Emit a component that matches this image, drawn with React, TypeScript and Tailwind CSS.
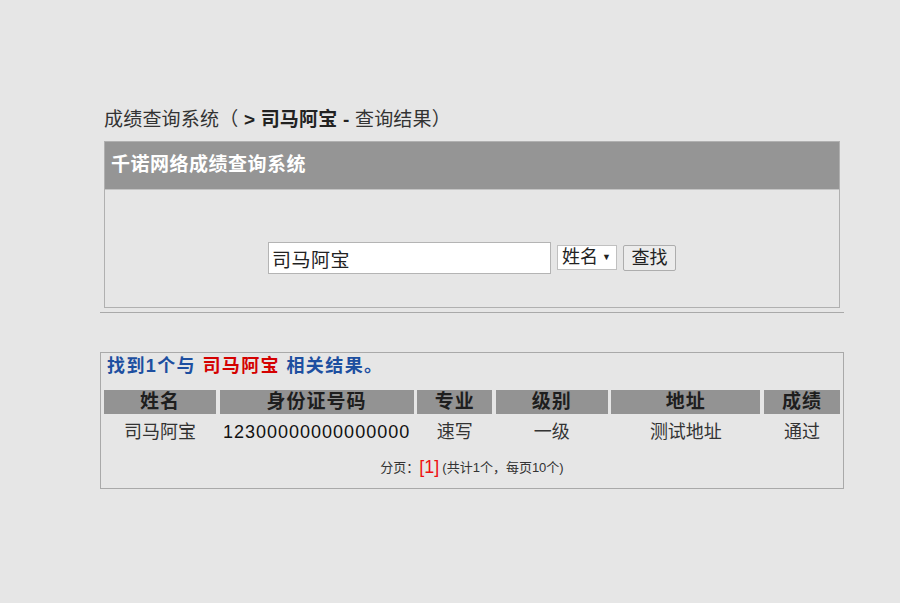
import React from "react";

const font = { fontFamily: '"Liberation Sans", Arial, "Noto Sans CJK SC", sans-serif' };

const columns = [
  { title: "姓名", value: "司马阿宝" },
  { title: "身份证号码", value: "12300000000000000" },
  { title: "专业", value: "速写" },
  { title: "级别", value: "一级" },
  { title: "地址", value: "测试地址" },
  { title: "成绩", value: "通过" },
];

export default function App() {
  return (
    <div className="min-h-[603px] w-[900px] bg-[#e6e6e6] text-[#333]" style={font}>
      <div className="ml-[100px] w-[744px] pt-[108px]">
        {/* breadcrumb */}
        <div className="h-[24px] pl-1 text-[19px] leading-[24px] tracking-[0.2px] text-[#333]">
          成绩查询系统（ <b className="text-[#222]">&gt; 司马阿宝 -</b> 查询结果）
        </div>

        {/* search panel */}
        <div className="mx-1 mt-[9px] border border-[#b0b0b0]">
          <div className="flex h-[47px] items-center bg-[#959595] pl-[6px] text-[19px] font-bold tracking-[0.5px] text-white">
            千诺网络成绩查询系统
          </div>
          <div className="flex h-[118px] justify-center gap-[6px] border-t border-[#c4c4c4] pt-[52px]">
            <input
              defaultValue="司马阿宝"
              className="h-[32px] w-[283px] border border-[#b4b4b4] bg-white px-[3px] text-[19px] tracking-[0.5px] text-[#222] outline-none"
              style={font}
            />
            <div className="mt-[3px] flex h-[25px] w-[60px] items-center justify-between border border-[#c0c0c0] bg-white pl-[4px] pr-[5px] text-[18px] text-[#222]">
              <span>姓名</span>
              <span className="text-[9px]">▼</span>
            </div>
            <button
              className="mt-[3px] h-[26px] w-[53px] rounded-[2px] border border-[#adadad] bg-[#ececec] text-[18px] leading-none text-[#222]"
              style={font}
            >
              查找
            </button>
          </div>
        </div>

        <div className="mt-[4px] h-px bg-[#a9a9a9]" />

        {/* results */}
        <div className="mt-[39px] h-[137px] border border-[#a9a9a9] px-[3px]">
          <div className="h-[26px] pl-[3px] text-[18px] font-bold leading-[26px] tracking-[1.4px] text-[#1d4fa0]">
            找到1个与 <span className="text-[#d40000]">司马阿宝</span> 相关结果。
          </div>
          <div className="mt-[11px] grid grid-cols-[112px_194px_75px_112px_149px_76px] justify-between">
            {columns.map((c) => (
              <div
                key={c.title}
                className="h-[24px] bg-[#939393] text-center text-[19px] font-bold leading-[24px] tracking-[1px] text-[#1e1e1e]"
              >
                {c.title}
              </div>
            ))}
            {columns.map((c) => (
              <div
                key={c.title + "v"}
                className={
                  "h-[34px] text-center text-[18px] leading-[36px] " +
                  (c.title === "身份证号码" ? "tracking-[1px] text-[#111]" : "text-[#333]")
                }
              >
                {c.value}
              </div>
            ))}
          </div>
          <div className="mt-[6px] flex items-center justify-center text-[13px] text-[#333]">
            <span>分页：</span>
            <span className="text-[18px] text-[#ee1111]">[1]</span>
            <span className="ml-[3px]">(共计1个，每页10个)</span>
          </div>
        </div>
      </div>
    </div>
  );
}
